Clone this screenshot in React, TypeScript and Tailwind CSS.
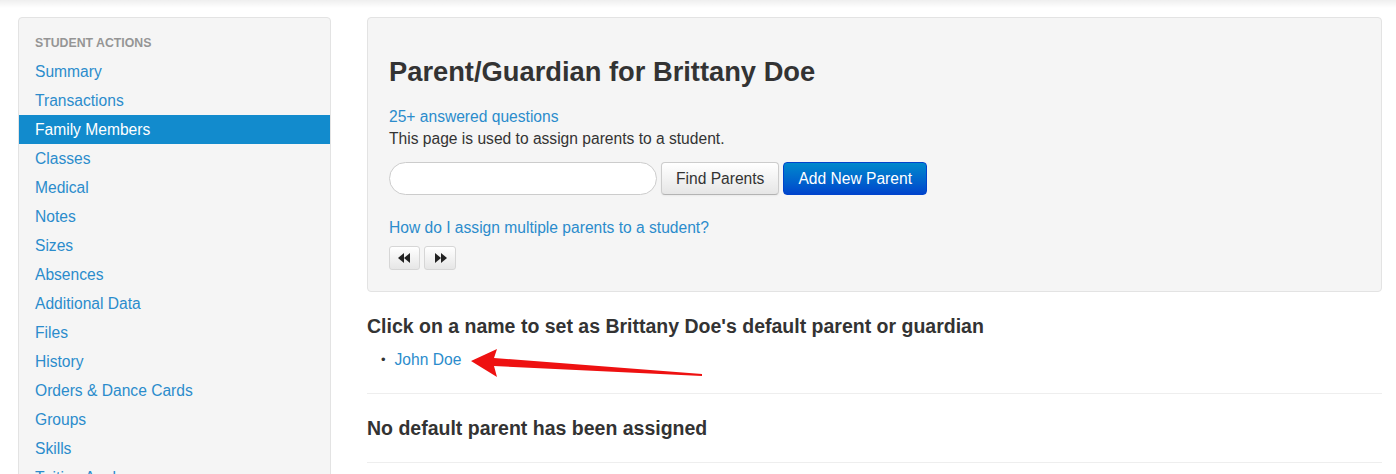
import React from 'react'

const actions = [
  'Summary',
  'Transactions',
  'Family Members',
  'Classes',
  'Medical',
  'Notes',
  'Sizes',
  'Absences',
  'Additional Data',
  'Files',
  'History',
  'Orders & Dance Cards',
  'Groups',
  'Skills',
  'Tuition Analyzer',
  'Emails',
]

function Sidebar() {
  return (
    <div className="w-[313px] shrink-0 bg-[#f5f5f5] border border-[#e3e3e3] rounded-[4px] pt-[15px] pb-[9px]">
      <div className="px-[16px] h-[20px] leading-[20px] text-[12.3px] font-bold uppercase text-[#959595] mb-[4px]">
        Student Actions
      </div>
      <ul>
        {actions.map((item) => {
          const active = item === 'Family Members'
          return (
            <li key={item}>
              <a
                href="#"
                className={
                  active
                    ? 'block h-[29px] leading-[29px] px-[16px] text-[15.6px] bg-[#128bcd] text-white'
                    : 'block h-[29px] leading-[29px] px-[16px] text-[15.6px] text-[#2b8ccc]'
                }
              >
                {item}
              </a>
            </li>
          )
        })}
      </ul>
    </div>
  )
}

function BackIcon() {
  return (
    <svg width="13" height="10" viewBox="0 0 13 10">
      <polygon points="0,5 6,0 6,10" fill="#222" />
      <polygon points="6,5 12,0 12,10" fill="#222" />
    </svg>
  )
}

function ForwardIcon() {
  return (
    <svg width="13" height="10" viewBox="0 0 13 10">
      <polygon points="1,0 7,5 1,10" fill="#222" />
      <polygon points="7,0 13,5 7,10" fill="#222" />
    </svg>
  )
}

function Arrow() {
  return (
    <svg
      className="absolute left-[87px] top-[-2px] pointer-events-none"
      width="240"
      height="36"
      viewBox="0 0 240 36"
    >
      <polygon
        points="3,14 29,2 26,11 234,27 234,29 26,19 29,30"
        fill="#ee1111"
      />
    </svg>
  )
}

export default function App() {
  return (
    <div className="min-h-screen bg-white text-[#333333] text-[15.6px]" style={{ fontFamily: '"Liberation Sans", Arial, sans-serif' }}>
      <div className="h-[8px] bg-gradient-to-b from-[#efefef] to-white" />
      <div className="flex gap-[36px] pl-[18px] pr-[14px] pt-[9px]">
        <Sidebar />

        <div className="flex-1 min-w-0">
          <div className="bg-[#f5f5f5] border border-[#e3e3e3] rounded-[4px] pl-[21px] pr-[21px] pt-[38px] pb-[21px]">
            <h2 className="text-[27.3px] leading-[32px] font-bold text-[#333333]">
              Parent/Guardian for Brittany Doe
            </h2>
            <div className="mt-[18px] leading-[22px]">
              <a href="#" className="text-[#2b8ccc]">25+ answered questions</a>
            </div>
            <p className="leading-[22px]">This page is used to assign parents to a student.</p>
            <div className="flex items-center gap-[4px] mt-[12px]">
              <input
                type="text"
                className="w-[268px] h-[33px] bg-white border border-[#cccccc] rounded-full px-[12px] outline-none"
              />
              <button className="h-[33px] px-[14px] text-[15.6px] text-[#333333] border border-[#cccccc] border-b-[#b3b3b3] rounded-[4px] bg-gradient-to-b from-white to-[#e6e6e6] shadow-[inset_0_1px_0_rgba(255,255,255,0.2),0_1px_2px_rgba(0,0,0,0.05)]">
                Find Parents
              </button>
              <button className="h-[33px] px-[14px] text-[15.6px] text-white border border-[#0044cc] rounded-[4px] bg-gradient-to-b from-[#0088cc] to-[#0044cc]">
                Add New Parent
              </button>
            </div>
            <div className="mt-[22px] leading-[22px]">
              <a href="#" className="text-[#2b8ccc]">How do I assign multiple parents to a student?</a>
            </div>
            <div className="flex gap-[4px] mt-[7px]">
              <button className="w-[31px] h-[24px] flex items-center justify-center border border-[#d6d6d6] rounded-[3px] bg-gradient-to-b from-white to-[#e6e6e6]">
                <BackIcon />
              </button>
              <button className="w-[32px] h-[24px] flex items-center justify-center border border-[#d6d6d6] rounded-[3px] bg-gradient-to-b from-white to-[#e6e6e6]">
                <ForwardIcon />
              </button>
            </div>
          </div>

          <h4 className="mt-[21px] text-[19.5px] leading-[26px] font-bold text-[#333333]">
            Click on a name to set as Brittany Doe's default parent or guardian
          </h4>
          <ul className="mt-[10px] pl-[14px]">
            <li className="relative leading-[22px] flex items-center">
              <span className="text-[13px] mr-[9px] text-[#333333]">•</span>
              <a href="#" className="text-[#2b8ccc]">John Doe</a>
              <Arrow />
            </li>
          </ul>
          <hr className="mt-[22px] border-t border-[#eeeeee]" />
          <h4 className="mt-[21px] text-[19.5px] leading-[26px] font-bold text-[#333333]">
            No default parent has been assigned
          </h4>
          <hr className="mt-[21px] border-t border-[#eeeeee]" />
        </div>
      </div>
    </div>
  )
}
